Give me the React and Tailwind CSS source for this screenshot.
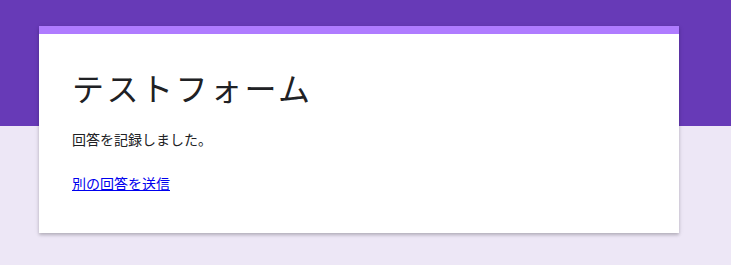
export default function App() {
  return (
    <div
      className="relative min-h-[265px] w-full bg-[#ede7f6]"
      style={{ fontFamily: '"Noto Sans CJK JP", "Noto Sans", sans-serif' }}
    >
      <div className="absolute left-0 right-0 top-0 h-[126px] bg-[#673ab7]" />
      <div className="relative pt-[26px] pl-[39px]">
        <div className="w-[640px] overflow-hidden bg-white shadow-[0_2px_3px_rgba(0,0,0,0.2),0_1px_6px_rgba(0,0,0,0.08)]">
          <div className="h-[8px] bg-[#af7bff]" />
          <div className="pl-[33px] pr-6 pt-[33px] pb-[40px] text-[#202124]">
            <h1 className="text-[32px] leading-[40px] font-normal tracking-[2.5px]">テストフォーム</h1>
            <p className="mt-[22px] text-[14px] leading-[20px]">回答を記録しました。</p>
            <a href="#" className="mt-[24px] block text-[14px] leading-[20px] text-[#0000ee] underline">
              別の回答を送信
            </a>
          </div>
        </div>
      </div>
    </div>
  );
}
